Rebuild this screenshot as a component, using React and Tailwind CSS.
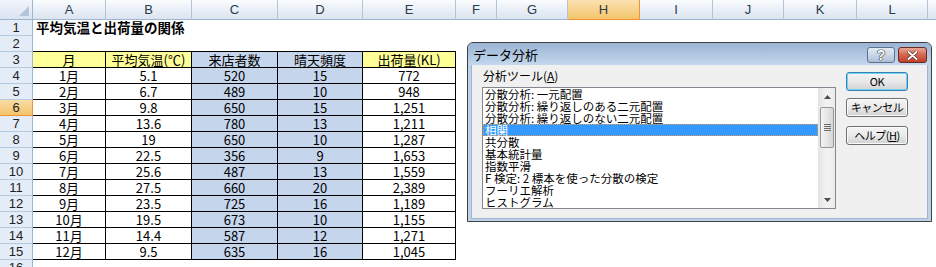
import React from 'react';

const jp = "font-['Noto_Sans_CJK_JP','Noto_Sans_CJK_SC',sans-serif]";
const hdrFont = "font-['Liberation_Sans','Noto_Sans_CJK_JP',sans-serif]";

const COLS = [
    { l: 'A', w: 'w-[73px]' },
    { l: 'B', w: 'w-[86px]' },
    { l: 'C', w: 'w-[86px]' },
    { l: 'D', w: 'w-[85px]' },
    { l: 'E', w: 'w-[93px]' },
    { l: 'F', w: 'w-[41px]' },
    { l: 'G', w: 'w-[71px]' },
    { l: 'H', w: 'w-[72px]' },
    { l: 'I', w: 'w-[73px]' },
    { l: 'J', w: 'w-[71px]' },
    { l: 'K', w: 'w-[73px]' },
    { l: 'L', w: 'w-[71px]' },
    { l: 'M', w: 'w-[72px]' },
];

const HEAD = ['月', '平均気温(℃)', '来店者数', '晴天頻度', '出荷量(KL)'];

const DATA = [
    ['1月', '5.1', '520', '15', '772'],
    ['2月', '6.7', '489', '10', '948'],
    ['3月', '9.8', '650', '15', '1,251'],
    ['4月', '13.6', '780', '13', '1,211'],
    ['5月', '19', '650', '10', '1,287'],
    ['6月', '22.5', '356', '9', '1,653'],
    ['7月', '25.6', '487', '13', '1,559'],
    ['8月', '27.5', '660', '20', '2,389'],
    ['9月', '23.5', '725', '16', '1,189'],
    ['10月', '19.5', '673', '10', '1,155'],
    ['11月', '14.4', '587', '12', '1,271'],
    ['12月', '9.5', '635', '16', '1,045'],
];

const TOOLS = [
    '分散分析: 一元配置',
    '分散分析: 繰り返しのある二元配置',
    '分散分析: 繰り返しのない二元配置',
    '相関',
    '共分散',
    '基本統計量',
    '指数平滑',
    'F 検定: 2 標本を使った分散の検定',
    'フーリエ解析',
    'ヒストグラム',
];

function Row({ n, hl, children }) {
    return (
        <div className="flex h-[16px]">
            <div
                className={`w-[33px] shrink-0 h-full flex items-center justify-center border-r border-b text-[13px] text-[#222] ${hdrFont} ${
                    hl
                        ? 'bg-gradient-to-b from-[#f9dca6] to-[#f2c46a] border-[#f29436]'
                        : 'bg-[#e4ecf7] border-r-[#9eb6ce] border-b-[#b8c9dc]'
                }`}
            >
                {n}
            </div>
            {children}
        </div>
    );
}

function TableRow({ vals, head }) {
    return COLS.map((c, i) => {
        if (i > 4) return <div key={c.l} className={`${c.w} shrink-0`} />;
        let bg = 'bg-white';
        if (i === 2 || i === 3) bg = 'bg-[#c5d5ec]';
        else if (head) bg = 'bg-[#ffff99]';
        return (
            <div
                key={c.l}
                className={`${c.w} shrink-0 h-full border-r border-b border-black flex items-center justify-center text-[13px] leading-none text-black whitespace-nowrap ${bg}`}
            >
                {vals[i]}
            </div>
        );
    });
}

function Sheet() {
    return (
        <div className={`${jp}`}>
            <div className="flex h-[20px]">
                <div className="w-[33px] shrink-0 h-full border-r border-b border-[#9eb6ce] bg-gradient-to-b from-[#f3f6fb] to-[#d9e3f1] relative">
                    <svg className="absolute right-[3px] bottom-[3px]" width="10" height="10" viewBox="0 0 10 10">
                        <polygon points="10,0 10,10 0,10" fill="#b4c4d9" />
                    </svg>
                </div>
                {COLS.map((c) => (
                    <div
                        key={c.l}
                        className={`${c.w} shrink-0 h-full flex items-center justify-center border-r border-b text-[13px] text-[#2a3a4a] ${hdrFont} ${
                            c.l === 'H'
                                ? 'bg-gradient-to-b from-[#fbe1b0] to-[#f3c46a] border-[#f29436]'
                                : 'bg-gradient-to-b from-[#fafcfe] via-[#eaf0f8] to-[#dbe4f1] border-r-[#b2c4d9] border-b-[#9eb6ce]'
                        }`}
                    >
                        {c.l}
                    </div>
                ))}
            </div>
            <Row n={1}>
                <div className="pl-[3px] flex items-center text-[13.5px] font-bold leading-none whitespace-nowrap text-black">
                    平均気温と出荷量の関係
                </div>
            </Row>
            <Row n={2}>
                {COLS.slice(0, 5).map((c) => (
                    <div key={c.l} className={`${c.w} shrink-0 h-full border-b border-black`} />
                ))}
            </Row>
            <Row n={3}>
                <TableRow vals={HEAD} head />
            </Row>
            {DATA.map((d, i) => (
                <Row key={i} n={i + 4} hl={i + 4 === 6}>
                    <TableRow vals={d} />
                </Row>
            ))}
            <Row n={16} />
        </div>
    );
}

function Btn({ children, def }) {
    return (
        <div
            className={`w-[62px] h-[19px] rounded-[3px] border flex items-center justify-center text-[11px] tracking-[-0.5px] leading-none text-black bg-gradient-to-b from-[#f4f4f4] via-[#e9e9e9] via-50% to-[#d2d2d2] ${
                def ? 'border-[#3c7fb1] shadow-[inset_0_0_0_1px_#6fd3f7]' : 'border-[#707070] shadow-[inset_0_0_0_1px_#fbfbfb]'
            }`}
        >
            {children}
        </div>
    );
}

function Scrollbar() {
    return (
        <div className="w-[17px] h-full shrink-0 flex flex-col bg-gradient-to-r from-[#e6e6e6] via-[#f3f3f3] to-[#ebebeb] border-l border-[#e3e3e3]">
            <div className="h-[17px] flex items-center justify-center">
                <svg width="7" height="4" viewBox="0 0 7 4">
                    <polygon points="3.5,0 7,4 0,4" fill="#4d4d4d" />
                </svg>
            </div>
            <div className="mt-[2px] mx-[1px] h-[41px] rounded-[2px] border border-[#979797] bg-gradient-to-r from-[#f5f5f5] to-[#d6d6d6] flex flex-col items-center justify-center gap-[1px]">
                <div className="w-[7px] h-[1px] bg-[#6e6e6e]" />
                <div className="w-[7px] h-[1px] bg-[#6e6e6e]" />
                <div className="w-[7px] h-[1px] bg-[#6e6e6e]" />
                <div className="w-[7px] h-[1px] bg-[#6e6e6e]" />
            </div>
            <div className="flex-1" />
            <div className="h-[17px] flex items-center justify-center">
                <svg width="7" height="4" viewBox="0 0 7 4">
                    <polygon points="0,0 7,0 3.5,4" fill="#4d4d4d" />
                </svg>
            </div>
        </div>
    );
}

function Dialog() {
    return (
        <div className={`absolute left-[467px] top-[42px] w-[465px] h-[180px] rounded-t-[6px] border border-[#3f3f3f] bg-[#bdd3ea] flex flex-col overflow-hidden ${jp}`}>
            <div className="h-[22px] shrink-0 bg-gradient-to-b from-[#9ab4d2] to-[#c4d8ee] flex items-center pl-[5px]">
                <span className="text-[13px] leading-none text-black">データ分析</span>
                <div className="ml-auto mr-[4px] mt-[2px] flex gap-[3px]">
                    <div className="w-[28px] h-[16px] rounded-[3px] border border-[#5e7290] bg-gradient-to-b from-[#e4ecf5] via-[#c9d7e8] via-50% to-[#aebfd6] flex items-center justify-center">
                        <span className={`text-[14px] font-bold leading-none text-white [text-shadow:0_0_1px_#222,0_0_1px_#222,0_0_1px_#222] ${hdrFont}`}>?</span>
                    </div>
                    <div className="w-[29px] h-[16px] rounded-[3px] border border-[#6a2a20] bg-gradient-to-b from-[#e9a595] via-[#d4654f] via-50% to-[#bf412b] flex items-center justify-center">
                        <svg width="11" height="9" viewBox="0 0 11 9">
                            <path d="M1.5 1 L9.5 8 M9.5 1 L1.5 8" stroke="#5a1a10" strokeWidth="3.2" strokeLinecap="round" />
                            <path d="M1.5 1 L9.5 8 M9.5 1 L1.5 8" stroke="#fff" strokeWidth="2" strokeLinecap="round" />
                        </svg>
                    </div>
                </div>
            </div>
            <div className="flex-1 mx-[3px] mb-[2px] bg-[#f0f0f0] border-x border-b border-[#a3b5cb] flex">
                <div className="pl-[10px] pt-[4px]">
                    <div className="h-[14px] pl-[1px] text-[12px] leading-[14px] text-black">
                        分析ツール(<span className="underline underline-offset-1">A</span>)
                    </div>
                    <div className="mt-[4px] w-[354px] h-[122px] border border-[#828790] bg-white flex">
                        <div className="flex-1 text-[11.5px] text-black">
                            {TOOLS.map((t, i) => (
                                <div
                                    key={t}
                                    className={`h-[12px] leading-[12px] pl-[2px] whitespace-nowrap ${
                                        i === 3 ? 'bg-[#3399ff] text-white outline-1 outline-dotted outline-offset-[-1px] outline-[#d9a35a]' : ''
                                    }`}
                                >
                                    {t}
                                </div>
                            ))}
                        </div>
                        <Scrollbar />
                    </div>
                </div>
                <div className="ml-[10px] pt-[7px] flex flex-col">
                    <Btn def>OK</Btn>
                    <div className="mt-[7px]">
                        <Btn>キャンセル</Btn>
                    </div>
                    <div className="mt-[9px]">
                        <Btn>
                            ヘルプ(<span className="underline underline-offset-1">H</span>)
                        </Btn>
                    </div>
                </div>
            </div>
        </div>
    );
}

export default function App() {
    return (
        <div className="relative w-[936px] h-[267px] overflow-hidden bg-white">
            <Sheet />
            <Dialog />
        </div>
    );
}
